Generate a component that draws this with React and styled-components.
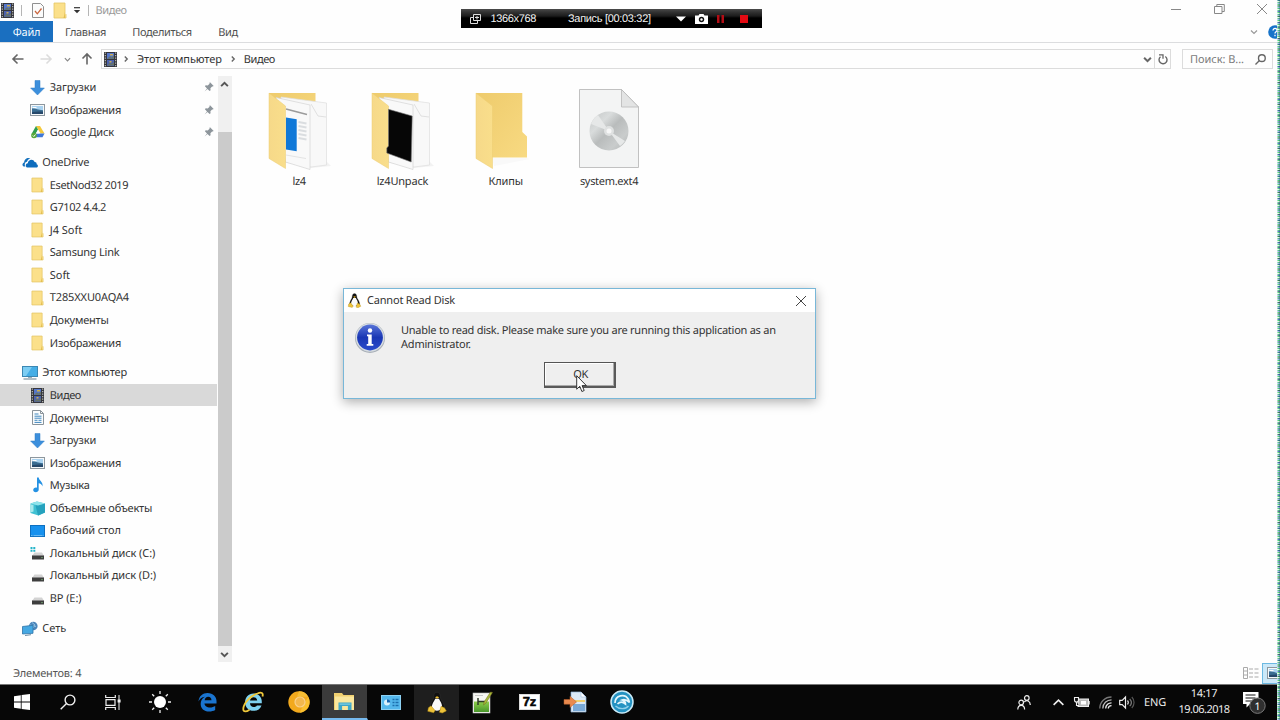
import React from "react";
import styled, { createGlobalStyle } from "styled-components";

const Global = createGlobalStyle`
  * { box-sizing: border-box; }
  html, body { margin: 0; padding: 0; overflow: hidden; }
  body {
    font-family: "Noto Sans", "Open Sans", sans-serif;
    font-size: 11px;
    color: #333;
    text-rendering: geometricPrecision;
  }
  svg { display: block; flex: none; overflow: visible; }
`;

const Screen = styled.div`
  position: relative;
  width: 1280px;
  height: 720px;
  display: flex;
  background: #fefefe;
  overflow: hidden;
`;
const Desktop = styled.div`
  flex: 1;
  min-width: 0;
  display: flex;
  flex-direction: column;
`;
const NoiseStrip = styled.div`
  width: 3px;
  height: 720px;
  background:
    linear-gradient(90deg, rgba(255, 255, 255, 0.45) 0 1px, transparent 1px 2px, rgba(20, 50, 110, 0.3) 2px),
    repeating-linear-gradient(180deg, rgba(20, 40, 160, 0.45) 0 1px, transparent 1px 5px, rgba(20, 20, 30, 0.4) 5px 6px, transparent 6px 11px),
    repeating-linear-gradient(180deg, #4fd27a 0 1px, #e0f6e0 1px 2px, #58c08f 2px 3px, #a5b8e8 3px 4px);
`;
const Text = styled.span`
  white-space: pre;
  letter-spacing: ${(p) => p.$t ?? -0.19}px;
  color: ${(p) => p.$c || "inherit"};
  font-size: 11px;
  line-height: 16px;
`;

/* ---------- explorer header ---------- */
const TitleBar = styled.div`
  height: 21px;
  display: flex;
  align-items: center;
  justify-content: space-between;
`;
const QuickAccess = styled.div`
  display: flex;
  align-items: center;
  height: 21px;
  padding-left: 1px;
`;
const Divider = styled.i`
  width: 1px;
  height: 11px;
  background: #b5b5b5;
  margin: 0 ${(p) => p.$r}px 0 ${(p) => p.$l}px;
`;
const WindowButtons = styled.div`
  display: flex;
  align-items: center;
  gap: 32.5px;
  padding: 0 10px 4px 0;
`;
const TabRow = styled.div`
  height: 22px;
  display: flex;
  justify-content: space-between;
  border-bottom: 1px solid #dcdddf;
`;
const Tabs = styled.div`
  display: flex;
`;
const Tab = styled.div`
  height: 21px;
  width: ${(p) => p.$w}px;
  padding-top: 2px;
  display: flex;
  align-items: center;
  justify-content: center;
  background: ${(p) => (p.$active ? "#1a6fc0" : "transparent")};
  color: ${(p) => (p.$active ? "#f4faff" : "#505050")};
`;
const RibbonTools = styled.div`
  display: flex;
  align-items: center;
  gap: 10px;
  width: 27px;
  overflow: hidden;
`;
const AddressRow = styled.div`
  height: 33px;
  display: flex;
  align-items: center;
  padding: 0 4px 0 12px;
`;
const Nav = styled.div`
  display: flex;
  align-items: center;
  width: 89px;
`;
const AddressBox = styled.div`
  flex: 1;
  height: 20px;
  border: 1px solid #dcdcdc;
  display: flex;
  align-items: center;
  padding-left: 2px;
`;
const Crumb = styled.div`
  display: flex;
  align-items: center;
  flex: 1;
`;
const Refresh = styled.div`
  height: 18px;
  width: 16px;
  display: flex;
  align-items: center;
  justify-content: center;
  border-left: 1px solid #dcdcdc;
`;
const SearchBox = styled.div`
  width: 91px;
  height: 20px;
  margin-left: 11px;
  border: 1px solid #dcdcdc;
  display: flex;
  align-items: center;
  justify-content: space-between;
  padding: 0 6px 0 7px;
`;

/* ---------- body ---------- */
const Body = styled.div`
  height: 587px;
  display: flex;
`;
const Tree = styled.div`
  width: 217px;
  height: 587px;
  padding-top: 0.5px;
`;
const Group = styled.div`
  margin-bottom: 7.3px;
`;
const TreeRow = styled.div`
  height: 22.57px;
  display: flex;
  align-items: center;
  padding: 0 3px 0 ${(p) => (p.$root ? 22 : 29.5)}px;
  background: ${(p) => (p.$selected ? "#d9d9d9" : "transparent")};
`;
const IconCell = styled.span`
  width: 16px;
  margin-right: 4.3px;
  display: flex;
  justify-content: center;
`;
const LabelBox = styled.div`
  display: flex;
  padding-top: ${(p) => p.$down ?? 1.5}px;
`;
const PinCell = styled.span`
  margin-left: auto;
`;
const ScrollBar = styled.div`
  width: 14px;
  height: 586px;
  margin-left: 1px;
  background: #f0f0f0;
  display: flex;
  flex-direction: column;
  justify-content: space-between;
`;
const ScrollButton = styled.div`
  height: 16px;
  padding: 1px 1px 0 0;
  display: flex;
  align-items: center;
  justify-content: center;
`;
const Thumb = styled.div`
  margin-top: 40px;
  flex: 1;
  background: #cbcbcb;
`;
const Files = styled.div`
  display: flex;
  padding: 8px 0 0 15.5px;
`;
const FileItem = styled.div`
  width: 103.3px;
  display: flex;
  flex-direction: column;
  align-items: center;
`;
const StatusBar = styled.div`
  height: 21px;
  display: flex;
  align-items: center;
  justify-content: space-between;
  padding: 0 0 0 13px;
`;
const ViewModes = styled.div`
  display: flex;
  align-items: center;
  gap: 3px;
`;
const ViewSelected = styled.div`
  width: 15px;
  height: 21px;
  border: 1px solid #6cb9e2;
  border-right: 0;
  background: #cbe8f8;
  display: flex;
  align-items: center;
  padding-left: 4px;
  overflow: hidden;
`;

/* ---------- taskbar ---------- */
const TaskBar = styled.div`
  height: 37px;
  background: #070707;
  border-top: 1px solid #777;
  display: flex;
  justify-content: space-between;
`;
const TaskApps = styled.div`
  display: flex;
`;
const TaskButton = styled.div`
  width: ${(p) => p.$w || 46.1}px;
  display: flex;
  align-items: center;
  justify-content: center;
  background: ${(p) => p.$bg || "transparent"};
  border-bottom: ${(p) => (p.$active ? "2px solid #76b9ed" : "0")};
  border-right: ${(p) => (p.$bg ? "1px solid #070707" : "0")};
`;
const Tray = styled.div`
  display: flex;
  align-items: center;
  color: #ececec;
`;
const TrayCell = styled.div`
  width: ${(p) => p.$w}px;
  display: flex;
  flex-direction: column;
  align-items: center;
  justify-content: center;
`;

/* ---------- floating windows ---------- */
const Recorder = styled.div`
  position: absolute;
  left: 461px;
  top: 9px;
  width: 301px;
  height: 19px;
  background: linear-gradient(#4a4a4a 0, #333 3px, #1c1c1c 7px, #000 9px);
  color: #f2f2f2;
  display: flex;
  align-items: center;
  padding: 1px 0 0 9px;
  font-family: "Liberation Sans", Arial, sans-serif;
`;
const Spacer = styled.i`
  width: ${(p) => p.$w}px;
`;
const Dialog = styled.div`
  position: absolute;
  left: 343px;
  top: 288px;
  width: 473px;
  height: 111px;
  border: 1px solid #78b7d8;
  background: #efefef;
  box-shadow: 0 3px 11px rgba(0, 0, 0, 0.32);
`;
const DialogTitle = styled.div`
  height: 23px;
  background: #fff;
  display: flex;
  align-items: center;
  padding: 0 9.5px 0 4px;
`;
const DialogName = styled.div`
  flex: 1;
  padding-left: 6px;
`;
const DialogContent = styled.div`
  display: flex;
  padding: 9px 0 0 10px;
  height: 50px;
`;
const Message = styled.div`
  padding: 2.5px 0 0 15px;
  display: flex;
  flex-direction: column;
  span { line-height: 14px; }
`;
const OkButton = styled.div`
  width: 72px;
  height: 26px;
  margin-left: 200px;
  padding: 1px 0 0 2px;
  border: 1px solid #555;
  border-right: 2px solid #5a5a5a;
  border-bottom: 2px solid #5a5a5a;
  box-shadow: inset -1px -1px 0 #aaa, inset 1px 1px 0 #fff;
  display: flex;
  align-items: center;
  justify-content: center;
`;
const Cursor = styled.div`
  position: absolute;
  left: 576px;
  top: 375px;
`;

/* ---------- icons ---------- */
const FolderIcon = ({ w = 13, h = 16 }) => (
  <svg width={w} height={h} viewBox="0 0 14 17">
    <path d="M1 1h11v10.5l1 1V16H1z" fill="#fbe08a" stroke="#e6c766" strokeWidth=".8" />
    <path d="M12 10v6h-1.5z" fill="#e2bd52" />
  </svg>
);
const FilmIcon = ({ w = 13, h = 15 }) => (
  <svg width={w} height={h} viewBox="0 0 13 15">
    <rect width="13" height="15" fill="#35363d" />
    <path d="M1.3 .5v14M11.7 .5v14" stroke="#c9c9bd" strokeWidth="1.1" strokeDasharray="1.3 1.2" />
    <rect x="3" y="1" width="7" height="6" fill="#5677c9" />
    <rect x="3" y="8" width="7" height="6" fill="#4c62ad" />
    <path d="M3 6.8l3-2.6 1.5 1.2L10 3.6v3.2zM3 13.6l3-3 1.6 1.5 2.4-2v3.5z" fill="#66736a" />
    <path d="M6 2h3v1.5H6zM5.5 9h2v1.4h-2z" fill="#c9ad54" />
  </svg>
);
const DownIcon = () => (
  <svg width="15" height="15" viewBox="0 0 15 15">
    <path d="M5 .5h5V8h4.4L7.5 15 .6 8H5z" fill="#3c8fdc" stroke="#2f7cc6" strokeWidth=".5" />
  </svg>
);
const PictureIcon = () => (
  <svg width="15" height="12" viewBox="0 0 15 12">
    <rect x=".5" y=".5" width="14" height="11" fill="#f5f8fa" stroke="#8d979e" />
    <rect x="2" y="2" width="11" height="8" fill="#a9d2f0" />
    <path d="M2 4.5c3-.8 5 1.5 11 1.8V10H2z" fill="#3a6d92" />
    <path d="M2 8.3c4-1 7-1 11-.6V10H2z" fill="#26486a" />
    <path d="M2.5 3h4v1.2h-4z" fill="#fff" />
  </svg>
);
const DriveIcon = () => (
  <svg width="14" height="14" viewBox="0 0 14 14">
    <path d="M5 1h4l4.5 7.5H9.6z" fill="#f5c93b" />
    <path d="M5 1l2 3.6L2.5 12.5.5 9z" fill="#2f9e4f" />
    <path d="M4.8 8.5h8.7l-2 3.8h-9z" fill="#3f78d8" />
    <circle cx="3" cy="10.5" r="2.8" fill="#58a83c" />
    <path d="M1.8 10.5l1 1 1.7-2" stroke="#fff" fill="none" />
    <path d="M6.9 5l1.9 3.5H5z" fill="#fff" />
  </svg>
);
const OneDriveIcon = () => (
  <svg width="16" height="11" viewBox="0 0 16 11">
    <path d="M2.5 9.5C0 9.5-.2 6 2.2 5.4 2 2.2 6-.2 8.4 1.7c-2 .2-3 1.5-3.4 3-2 .3-2.9 2.8-1.6 4.8z" fill="#1571bd" />
    <path d="M5.8 10.6c-2.6 0-2.8-4 0-4.3.2-3.8 5.5-4.8 6.8-1.3 2 0 2.2 1.5 2 2.2 2 .6 1.6 3.4-.4 3.4z" fill="#0d6cbd" />
  </svg>
);
const PcIcon = () => (
  <svg width="16" height="14" viewBox="0 0 16 14">
    <rect x=".5" y=".5" width="15" height="10" fill="#45aee6" stroke="#3b87b3" />
    <path d="M1 1h9L4 10H1z" fill="#7ccdf3" />
    <path d="M6 11h4v1H6z" fill="#9cb0ba" />
    <path d="M1.5 13h13" stroke="#7d939f" strokeWidth="1.2" />
  </svg>
);
const DocIcon = () => (
  <svg width="12" height="15" viewBox="0 0 12 15">
    <path d="M.5.5h8l3 3v11H.5z" fill="#fafcfd" stroke="#8a949b" />
    <path d="M2.5 4h4M2.5 6.2h7M2.5 8.2h7M2.5 10.3h3M6.5 10.3h3M2.5 12.4h7" stroke="#3f87bf" strokeWidth="1" />
    <path d="M8.5.5v3h3" fill="none" stroke="#8a949b" />
  </svg>
);
const MusicIcon = () => (
  <svg width="12" height="16" viewBox="0 0 12 16">
    <path d="M5 .5h1.7C7.2 4 11.3 4.600 10.5 9.500 10 7.500 8.500 6.500 6.700 6.300v6.500c0 3-5.200 3.300-5.500.5C1 11.300 3.200 10 5 10.700z" fill="#2491e3" />
  </svg>
);
const CubeIcon = () => (
  <svg width="16" height="15" viewBox="0 0 16 15">
    <path d="M.5 2.500L7 .5l8 2v9L8.500 14.500.5 12z" fill="#3fc0d2" />
    <path d="M5.500 4.500l9.500-2v9L8 14.500z" fill="#25a1bd" />
    <path d="M.5 2.500L7 .5l8 2-7 2z" fill="#8fe3ea" />
    <path d="M.5 3.200L3.500 4v6.500l-3 1z" fill="#a8e9ec" />
  </svg>
);
const DesktopIcon = () => (
  <svg width="15" height="12" viewBox="0 0 15 12">
    <rect x=".5" y=".5" width="14" height="11" fill="#1791ee" stroke="#0d6fc0" />
    <path d="M1 10.600h13" stroke="#8ac6f3" strokeWidth=".8" strokeDasharray="1.500 1 9 1" />
  </svg>
);
const DiskIcon = ({ win }) => (
  <svg width="14" height="13" viewBox="0 0 14 13">
    {win && <path d="M-.5 0h2v2h-2zM2.300 0h2v2h-2zM-.5 2.800h2v2h-2zM2.300 2.800h2v2h-2z" fill="#24b4c9" />}
    <path d="M3.500 5.500h7.500L13 9H1z" fill="#d3d3d3" />
    <rect x="1" y="8.500" width="12" height="4" fill="#3e3e3e" />
    <path d="M1 8.500h12" stroke="#888" strokeWidth=".8" />
    <circle cx="11" cy="10.600" r=".6" fill="#8fdc8c" />
  </svg>
);
const NetIcon = () => (
  <svg width="16" height="15" viewBox="0 0 16 15">
    <circle cx="11.300" cy="5" r="4.300" fill="#4d86ba" />
    <path d="M10 1.500l3 2.500-2 3M8 4l6 1.500" stroke="#8fc0e2" fill="none" />
    <path d="M.5 5.500l10.500-1.200v8L.5 13z" fill="#45a8e2" stroke="#2f74a8" strokeWidth=".8" />
    <path d="M3 14.500l6-.8" stroke="#6b8ca4" />
  </svg>
);
const PinIcon = () => (
  <svg width="10" height="10" viewBox="0 0 10 10">
    <path d="M6 .3l3.700 3.700-1 .6-.6-.1-1.700 1.800.2 2-1 .8L3.500 7 .6 9.500 3 6.400.9 4.300l.8-1 2 .2 1.900-1.700-.2-.8z" fill="#8d959b" />
  </svg>
);
const Chevron = ({ dir = "down", size = 8, color = "#666", sw = 1.4 }) => {
  const paths = { down: "M1 2.500L4 5.500 7 2.500", up: "M1 5.500L4 2.500 7 5.500", right: "M2.800 1.600L5.200 4 2.800 6.400" };
  return (
    <svg width={size} height={size} viewBox="0 0 8 8">
      <path d={paths[dir]} fill="none" stroke={color} strokeWidth={sw} />
    </svg>
  );
};
const Arrow = ({ dir, color }) => {
  const rot = { left: 0, right: 180, up: 90 }[dir];
  return (
    <svg width="12" height="12" viewBox="0 0 12 12">
      <path transform={`rotate(${rot} 6 6)`} d="M11.500 6H1M5.500 1.500L1 6l4.500 4.500" fill="none" stroke={color} strokeWidth="1.600" />
    </svg>
  );
};
const Tux = ({ w, h }) => (
  <svg width={w} height={h} viewBox="0 0 20 22">
    <path d="M6.500 5c0-6.300 7-6.300 7 0 0 4 5.500 7 4.500 14H2.500C1.500 12 6.500 9 6.500 5z" fill="#111" stroke="#3a3a3a" strokeWidth=".4" />
    <path d="M8 7h4.200c.6 2.500 3.800 5 3 9.500-2 4-8 4.500-10.500 0C4.300 12 7.500 9.500 8 7z" fill="#fafafa" />
    <path d="M8 5.400l2-1 2.300 1L10 7.200z" fill="#e9b92e" />
    <path d="M.3 20.200l.7-3.700 2.800-2 4.200 5-1.500 2.200zM19.800 19.800l-2-3.300-3.500-1.500-1.800 6.200 3 .8z" fill="#eec33a" stroke="#a88413" strokeWidth=".5" />
  </svg>
);

/* Large thumbnails */
const Flap = () => <path d="M10 9l16.500 13v62.500L10 74.500z" fill="url(#flap)" stroke="#edcc70" strokeWidth=".5" />;
const Sheets = () => (
  <g>
    <path d="M24 74h40l8 8-20 2z" fill="#f2f2f2" />
    <path d="M22 13l45.500 6v62L52 83 26 78z" fill="#f8f8f8" stroke="#dedede" strokeWidth=".7" />
    <path d="M52 20l7 12 8 1" fill="none" stroke="#d5d5d5" strokeWidth=".7" />
    <path d="M17 13.500L51 21v64.500L26.500 78z" fill="#f9f9f9" stroke="#d4d4d4" strokeWidth=".7" />
  </g>
);
const HiddenDefs = styled.svg`
  position: absolute;
`;
const Defs = () => (
  <HiddenDefs width="0" height="0">
    <defs>
      <linearGradient id="flap" x1="0" x2="1"><stop stopColor="#f6d989" /><stop offset="1" stopColor="#f9de8b" /></linearGradient>
      <linearGradient id="back" x1="0" x2="1" y1="0" y2="1"><stop stopColor="#eecb6c" /><stop offset="1" stopColor="#f8da82" /></linearGradient>
      <linearGradient id="disc" x1="0" x2="1" y1="0" y2="1">
        <stop stopColor="#c2c5c5" /><stop offset=".3" stopColor="#d9dcdc" /><stop offset=".5" stopColor="#b9bcbc" /><stop offset=".75" stopColor="#c9cccc" /><stop offset="1" stopColor="#b0b3b3" />
      </linearGradient>
      <linearGradient id="info" x1="0" x2="0" y1="0" y2="1"><stop stopColor="#5773d8" /><stop offset=".5" stopColor="#1a37b4" /><stop offset="1" stopColor="#2a4bcb" /></linearGradient>
      <linearGradient id="grn" x1="0" x2="0" y1="0" y2="1"><stop stopColor="#8fce4a" /><stop offset="1" stopColor="#48962a" /></linearGradient>
    </defs>
  </HiddenDefs>
);
const Lz4Thumb = () => (
  <svg width="80" height="90" viewBox="0 0 80 90">
    <path d="M10 9h46.500v60H10z" fill="url(#back)" />
    <Sheets />
    <path d="M27 25l21 5.500" stroke="#9b9b9b" strokeWidth="1.500" />
    <path d="M27 33.500l10.700 1.700v32L27 65.500z" fill="#0f78d8" />
    <path d="M39.500 38l8 1.500M39.500 42l8 1.500M39.500 46l8 1.500M39.500 50l8 1.500M39.500 54l8 1.500" stroke="#dadde0" strokeWidth="2" />
    <path d="M27 71l20 3.500" stroke="#e4e4e4" />
    <Flap />
  </svg>
);
const UnpackThumb = () => (
  <svg width="80" height="90" viewBox="0 0 80 90">
    <path d="M10 9h46.500v60H10z" fill="url(#back)" />
    <Sheets />
    <Flap />
    <path d="M26.500 25.300L50.200 32l-1 46-24.400-9v-5l1.700-2z" fill="#060606" stroke="#777" strokeWidth=".6" />
  </svg>
);
const ClipsThumb = () => (
  <svg width="80" height="90" viewBox="0 0 80 90">
    <path d="M26 74h34l4 1-36 7z" fill="#f9f9f9" />
    <path d="M10 9h46.300v39l4.700 4.500v21H15z" fill="url(#back)" />
    <Flap />
  </svg>
);
const ImageThumb = () => (
  <svg width="80" height="90" viewBox="0 0 80 90">
    <path d="M10.500 5.500h42L69.500 23v60.500h-59z" fill="#f3f4f4" stroke="#b2b2b2" strokeWidth=".8" />
    <path d="M52.500 5.500V23h17z" fill="#e3e4e4" stroke="#b8b8b8" strokeWidth=".8" />
    <circle cx="40" cy="47" r="19.500" fill="url(#disc)" />
    <path d="M40 47L22 40a19.500 19.500 0 0 1 7-9zM40 47l16 10a19.500 19.500 0 0 1-5 5z" fill="#e6e8e8" />
    <circle cx="40" cy="47" r="5" fill="#dfe1e1" />
    <circle cx="40" cy="47" r="2.500" fill="#f7f7f7" />
  </svg>
);

/* Taskbar drawings */
const WinLogo = () => (
  <svg width="16" height="16" viewBox="0 0 16 16">
    <path d="M0 2.200l6.800-1v6.400H0zM7.600 1.100L16 0v7.600H7.600zM0 8.400h6.800v6.400l-6.800-1zM7.600 8.400H16V16l-8.400-1.100z" fill="#fff" />
  </svg>
);
const SearchGlyph = ({ size = 16, color = "#f0f0f0", sw = 1.400 }) => (
  <svg width={size} height={size} viewBox="0 0 16 16">
    <circle cx="10" cy="6" r="4.900" fill="none" stroke={color} strokeWidth={sw} />
    <path d="M6.500 9.500L.7 15.300" stroke={color} strokeWidth={sw} />
  </svg>
);
const TaskView = () => (
  <svg width="16" height="15" viewBox="0 0 16 15">
    <path d="M.7 0v2.500h9.600V0M.7 15v-2.500h9.600V15M1 4.600h9v5.800H1z" fill="none" stroke="#eee" strokeWidth="1.200" />
    <path d="M14 0v15" stroke="#ddd" strokeWidth="1.100" />
    <rect x="12.600" y="4.500" width="3" height="3" fill="#eee" />
  </svg>
);
const Sun = () => (
  <svg width="22" height="22" viewBox="0 0 22 22">
    <circle cx="11" cy="11" r="6" fill="#fff" />
    <path d="M11 0v3M11 19v3M0 11h3M19 11h3M3.200 3.200l2 2M16.800 16.800l2 2M18.800 3.200l-2 2M5.200 16.800l-2 2" stroke="#eee" strokeWidth="1.300" />
  </svg>
);
const EdgePath = "M.5 9.500C1.200 3.500 5 .5 10 .5c6 0 9.500 4 9.500 8.500v2.500H6.800c.3 3 3 4.300 5.700 4.300 2.300 0 4.200-.7 5.600-1.600v4.200c-1.600 1-4 1.600-6.300 1.600-5.600 0-9-3.300-9-8 0-3.300 1.500-6 4.500-7.500C4 5 1.700 6.800.5 9.500zM7 8.200h7.200c0-2.300-1.400-3.600-3.400-3.600-2.100 0-3.500 1.400-3.800 3.600z";
const Edge = () => (
  <svg width="19" height="20" viewBox="0 0 20 20"><path fillRule="evenodd" d={EdgePath} fill="#1a74cf" /></svg>
);
const IE = () => (
  <svg width="22" height="22" viewBox="0 0 22 22">
    <path fillRule="evenodd" d="M11.500 2.500c5 0 8.300 3.600 8.300 8.200v1.600H8c.2 2.500 1.600 3.700 3.700 3.700 1.600 0 2.600-.6 3.200-1.600h4.600c-1.200 3.400-4 5.400-7.900 5.400-5 0-8.500-3.500-8.500-8.600s3.500-8.700 8.400-8.700zM8 9.600h7.200c-.2-2-1.600-3.300-3.600-3.300S8.300 7.600 8 9.600z" fill="#7fd3f2" />
    <path d="M20.500 5.500c1-3.500-1-5-5-3C8.500 4.500 1 13 1.300 18.500c.2 2.700 3 2.400 6.200.2" fill="none" stroke="#efc83b" strokeWidth="1.800" />
  </svg>
);
const Canary = () => (
  <svg width="22" height="22" viewBox="0 0 22 22">
    <circle cx="11" cy="11" r="10.700" fill="#f2a91d" />
    <path d="M11 .3a10.700 10.700 0 0 1 9.300 5.400H9z" fill="#f7bd33" />
    <path d="M20.300 6a10.700 10.700 0 0 1-8.500 15.700l4-9z" fill="#fbc02f" />
    <circle cx="12" cy="11" r="5" fill="#f3b84e" stroke="#f9d08a" strokeWidth="1.200" />
  </svg>
);
const ExplorerIcon = () => (
  <svg width="21" height="19" viewBox="0 0 21 19">
    <path d="M0 1h8l1.500 2H20v15H0z" fill="#f0d070" />
    <path d="M1 4.500h19V18H1z" fill="#fae79d" />
    <path d="M4.500 18v-7.500h13V18h-3.600v-4h-5.800v4z" fill="#3fa6c8" />
    <path d="M5.500 11.500h11v1.200h-11z" fill="#7fd0e4" />
  </svg>
);
const PanelIcon = () => (
  <svg width="20" height="15" viewBox="0 0 20 15">
    <rect x=".5" y=".5" width="19" height="14" fill="#54b7ec" stroke="#8dd1f3" />
    <circle cx="6" cy="7.500" r="3" fill="#d9f0fc" />
    <path d="M6 7.500V4.300A3.200 3.200 0 0 1 9.200 7.500z" fill="#1565b0" />
    <path d="M11.500 4.500h6M11.500 7.500h6M11.500 10.500h6" stroke="#1c6fae" strokeWidth="1.300" strokeDasharray="2 1 3" />
  </svg>
);
const NotesIcon = () => (
  <svg width="22" height="23" viewBox="0 0 22 23">
    <rect x="1" y="2" width="17" height="20" fill="#f7f7f2" stroke="#bbb" strokeWidth=".6" />
    <rect x="2" y="10.500" width="15" height="10.500" fill="url(#grn)" />
    <path d="M3 4.500h8" stroke="#bbb" strokeWidth=".8" />
    <path d="M6 7v7M6 10.500h7" stroke="#2f3b28" strokeWidth="1.500" />
    <path d="M20.500 1.500L14 12l-2.500 2 .7-3.200L18.500 1z" fill="#a7bd3a" stroke="#75631e" strokeWidth=".5" />
  </svg>
);
const SevenBox = styled.div`
  width: 21px;
  height: 16px;
  background: #fff;
  border: 1px solid #ddd;
  color: #050505;
  display: flex;
  align-items: center;
  justify-content: center;
  font: bold 13px/14px "Liberation Sans", sans-serif;
  -webkit-text-stroke: 0.5px #050505;
`;
const ConvertIcon = () => (
  <svg width="23" height="22" viewBox="0 0 23 22">
    <path d="M7 1h10l5 5v15H7z" fill="#dce9f5" stroke="#8eb3d5" strokeWidth=".7" />
    <path d="M17 1v5h5z" fill="#fff" stroke="#8eb3d5" strokeWidth=".5" />
    <path d="M8 9h13v2H8z" fill="#f2cf6d" />
    <path d="M9 13h12v7H9z" fill="#79a9d7" />
    <path d="M0 8.500h6V5.300l6.500 5.700L6 16.500v-3.300H0z" fill="#e98a4e" stroke="#b65d28" strokeWidth=".5" />
  </svg>
);
const SwirlIcon = () => (
  <svg width="24" height="24" viewBox="0 0 24 24">
    <circle cx="12" cy="12" r="11" fill="#2492c2" stroke="#c9eaf7" strokeWidth="1.500" />
    <path d="M5 13c0-8 10-10 13.500-3.500l1 3c-3-3-5-3.500-7.500-2.500 2 .5 3.500 2 3.500 4-3-2.500-6-2-8 0" fill="none" stroke="#e4f6fc" strokeWidth="1.700" />
    <path d="M5.500 16c3.500 3.500 10 3.500 13 0" fill="none" stroke="#8fd0ea" strokeWidth="1.300" />
  </svg>
);
const PeopleIcon = () => (
  <svg width="14" height="15" viewBox="0 0 14 15" fill="none" stroke="#eee" strokeWidth="1.200">
    <circle cx="4.200" cy="7.500" r="2.300" /><path d="M.8 14.500c0-5.500 6.800-5.500 6.800 0" />
    <circle cx="9.800" cy="3" r="2.300" /><path d="M7.300 7c2.500-2.500 5.900-1 6 3" />
  </svg>
);
const BatteryIcon = () => (
  <svg width="16" height="12" viewBox="0 0 16 12">
    <rect x="4" y="3" width="10.500" height="7.500" fill="#bbb" stroke="#eee" />
    <path d="M15.300 5v3.500" stroke="#ddd" />
    <path d="M.5 1.500h4v2.500a2 2 0 0 1-4 0zM2.500 6v3.500H5" fill="#111" stroke="#eee" strokeWidth="1.100" />
    <path d="M7 5h5v3.500H7z" fill="#fff" />
  </svg>
);
const WifiIcon = () => (
  <svg width="13" height="13" viewBox="0 0 13 13" fill="none" strokeWidth="1.300">
    <path d="M.8 12.500C.8 6 6 1 12.500 1" stroke="#777" /><path d="M3.800 12.500c0-5 4-8.600 8.700-8.600" stroke="#bbb" />
    <path d="M6.700 12.500c0-3.500 3-5.700 5.800-5.700M9.300 12.500c0-1.700 1.400-2.900 3.200-2.900" stroke="#eee" />
  </svg>
);
const VolumeIcon = () => (
  <svg width="16" height="13" viewBox="0 0 16 13" fill="none" strokeWidth="1.200">
    <path d="M.7 4.300h2.500L6.500 1v11L3.200 8.700H.7z" stroke="#eee" /><path d="M8.500 4.500c1 1.200 1 2.800 0 4" stroke="#ddd" />
    <path d="M10.700 2.800c2 2.200 2 5.200 0 7.400" stroke="#777" /><path d="M12.800 1c3 3.200 3 7.800 0 11" stroke="#555" />
  </svg>
);
const ActionIcon = () => (
  <svg width="24" height="24" viewBox="0 0 24 24">
    <path d="M0 2h15.500v12H7l-3.500 3.500V14H0z" fill="#fff" />
    <path d="M2.500 5h10M2.500 8h10M2.500 11h6" stroke="#111" strokeWidth="1.100" />
    <circle cx="14.500" cy="15.700" r="7.700" fill="#2f2f2f" stroke="#777" />
    <text x="14.500" y="19.500" fontSize="10.500" fill="#fff" textAnchor="middle">1</text>
  </svg>
);

/* ---------- data ---------- */
const tracking = {
  "Загрузки": -0.1, "EsetNod32 2019": -0.4, "G7102 4.4.2": -0.42, "J4 Soft": -0.05, "Soft": -0.05, "Видео": -0.42,
  "Рабочий стол": -0.07, "Локальный диск (C:)": -0.1, "Локальный диск (D:)": -0.12, "Этот компьютер": -0.1,
  "Сеть": -0.05, "Изображения": -0.2, "OneDrive": -0.24, "Документы": -0.22, "Samsung Link": -0.22,
  "lz4Unpack": -0.2, "system.ext4": -0.3, "lz4": -0.3, "BP (E:)": -0.1, "T285XXU0AQA4": -0.13, "Клипы": -0.1,
};
const tree = [
  { items: [["Загрузки", DownIcon, 1], ["Изображения", PictureIcon, 1], ["Google Диск", DriveIcon, 1]] },
  {
    root: ["OneDrive", OneDriveIcon],
    items: ["EsetNod32 2019", "G7102 4.4.2", "J4 Soft", "Samsung Link", "Soft", "T285XXU0AQA4", "Документы", "Изображения"].map((n) => [n, FolderIcon]),
  },
  {
    root: ["Этот компьютер", PcIcon],
    items: [
      ["Видео", FilmIcon, 0, 1], ["Документы", DocIcon], ["Загрузки", DownIcon], ["Изображения", PictureIcon], ["Музыка", MusicIcon],
      ["Объемные объекты", CubeIcon], ["Рабочий стол", DesktopIcon], ["Локальный диск (C:)", () => <DiskIcon win />],
      ["Локальный диск (D:)", DiskIcon], ["BP (E:)", DiskIcon],
    ],
  },
  { root: ["Сеть", NetIcon], items: [] },
];
const files = [["lz4", Lz4Thumb], ["lz4Unpack", UnpackThumb], ["Клипы", ClipsThumb], ["system.ext4", ImageThumb]];
const apps = [
  [WinLogo, 44], [SearchGlyph, 47], [TaskView, 44], [Sun, 49], [Edge], [IE], [Canary],
  [ExplorerIcon, 46, "#3b3b3b", 1], [PanelIcon], [() => <Tux w={20} h={21} />, 46, "#1e1e1e"], [NotesIcon],
  [() => <SevenBox>7z</SevenBox>], [ConvertIcon], [SwirlIcon],
];

const Label = ({ children, ...rest }) => <Text $t={tracking[children]} {...rest}>{children}</Text>;

const Row = ({ data, root }) => {
  const [name, Icon, pinned, selected] = data;
  return (
    <TreeRow $root={root} $selected={selected}>
      <IconCell><Icon /></IconCell>
      <LabelBox><Label>{name}</Label></LabelBox>
      {pinned ? <PinCell><PinIcon /></PinCell> : null}
    </TreeRow>
  );
};

export default function App() {
  return (
    <Screen>
      <Global />
      <Defs />
      <Desktop>
        <TitleBar>
          <QuickAccess>
            <FilmIcon />
            <Divider $l={7} $r={10} />
            <svg width="12" height="15" viewBox="0 0 12 15">
              <path d="M.5.5h8l3 3v11H.5z" fill="#fbfbfb" stroke="#8f8f8f" />
              <path d="M3 8l2.300 2.800L9.500 5.500" fill="none" stroke="#c9643c" strokeWidth="1.300" />
            </svg>
            <Spacer $w={9} />
            <FolderIcon w={14} h={17} />
            <Spacer $w={6} />
            <svg width="8" height="7" viewBox="0 0 8 7"><path d="M1 .7h6" stroke="#333" strokeWidth="1.200" /><path d="M.8 3h6.400L4 6.300z" fill="#333" /></svg>
            <Divider $l={7} $r={6.5} />
            <Label $c="#999">Видео</Label>
          </QuickAccess>
          <WindowButtons>
            <svg width="10" height="10" viewBox="0 0 10 10"><path d="M0 5.500h10" stroke="#888" /></svg>
            <svg width="11" height="10" viewBox="0 0 11 10"><path d="M.5 2.500h7.500v7H.5zM2.800 2.500V.5h7.500v7H8" fill="none" stroke="#888" /></svg>
            <svg width="10" height="10" viewBox="0 0 10 10"><path d="M0 0l10 10M10 0L0 10" stroke="#888" /></svg>
          </WindowButtons>
        </TitleBar>
        <TabRow>
          <Tabs>
            <Tab $active $w={53}><Text>Файл</Text></Tab>
            <Tab $w={65}><Text $t={-0.35}>Главная</Text></Tab>
            <Tab $w={88}><Text $t={-0.4}>Поделиться</Text></Tab>
            <Tab $w={44}><Text $t={-0.4}>Вид</Text></Tab>
          </Tabs>
          <RibbonTools>
            <Chevron color="#999" sw={1.200} />
            <svg width="14" height="14" viewBox="0 0 14 14">
              <circle cx="7" cy="7" r="6.800" fill="#1673c9" />
              <path d="M5 5.500c0-3 4.300-2.500 4 0-.2 1.300-2 1.500-2 3M7 9.800v1.400" fill="none" stroke="#fff" strokeWidth="1.300" />
            </svg>
          </RibbonTools>
        </TabRow>
        <AddressRow>
          <Nav>
            <Arrow dir="left" color="#666" />
            <Spacer $w={16} />
            <Arrow dir="right" color="#dcdcdc" />
            <Spacer $w={12} />
            <Chevron color="#888" size={7} />
            <Spacer $w={10} />
            <Arrow dir="up" color="#666" />
          </Nav>
          <AddressBox>
            <FilmIcon />
            <Spacer $w={5} />
            <Chevron dir="right" />
            <Spacer $w={7} />
            <Crumb>
              <LabelBox $down={1}><Label>Этот компьютер</Label></LabelBox>
              <Spacer $w={7} />
              <Chevron dir="right" />
              <Spacer $w={7} />
              <LabelBox $down={1}><Label>Видео</Label></LabelBox>
            </Crumb>
            <Chevron size={9} sw={1.800} />
            <Spacer $w={2} />
            <Refresh>
              <svg width="10" height="11" viewBox="0 0 10 11">
                <path d="M7.300 2.500A4 4 0 1 1 2.500 2.700" fill="none" stroke="#666" strokeWidth="1.400" />
                <path d="M1 .8h4v4" fill="none" stroke="#666" strokeWidth="1.300" />
              </svg>
            </Refresh>
          </AddressBox>
          <SearchBox>
            <LabelBox $down={1}><Text $t={-0.05} $c="#7a7a7a">Поиск: В...</Text></LabelBox>
            <SearchGlyph size={11} color="#666" sw={2} />
          </SearchBox>
        </AddressRow>
        <Body>
          <Tree>
            {tree.map((g, i) => (
              <Group key={i}>
                {g.root && <Row data={g.root} root />}
                {g.items.map((it) => <Row key={it[0]} data={it} />)}
              </Group>
            ))}
          </Tree>
          <ScrollBar>
            <ScrollButton><Chevron dir="up" size={9} color="#555" sw={1.700} /></ScrollButton>
            <Thumb />
            <ScrollButton><Chevron size={9} color="#555" sw={1.700} /></ScrollButton>
          </ScrollBar>
          <Files>
            {files.map(([n, Pic]) => (
              <FileItem key={n}>
                <Pic />
                <Label>{n}</Label>
              </FileItem>
            ))}
          </Files>
        </Body>
        <StatusBar>
          <LabelBox $down={1}><Text $c="#555">Элементов: 4</Text></LabelBox>
          <ViewModes>
            <svg width="16" height="12" viewBox="0 0 16 12">
              <path d="M.5.5h4v11h-4zM.5 4h4M.5 8h4" fill="none" stroke="#aaa" />
              <path d="M6 2h10M6 6h10M6 10h10" stroke="#aaa" strokeDasharray="4 1.500" />
            </svg>
            <ViewSelected><PictureIcon /></ViewSelected>
          </ViewModes>
        </StatusBar>
        <TaskBar>
          <TaskApps>
            {apps.map(([Icon, w, bg, active], i) => (
              <TaskButton key={i} $w={w} $bg={bg} $active={active}><Icon /></TaskButton>
            ))}
          </TaskApps>
          <Tray>
            <TrayCell $w={40}><PeopleIcon /></TrayCell>
            <TrayCell $w={28}><Chevron dir="up" size={13} color="#eee" sw={1} /></TrayCell>
            <TrayCell $w={19}><BatteryIcon /></TrayCell>
            <TrayCell $w={28}><WifiIcon /></TrayCell>
            <TrayCell $w={15}><VolumeIcon /></TrayCell>
            <TrayCell $w={42}><LabelBox $down={1}><Text $t={-0.15}>ENG</Text></LabelBox></TrayCell>
            <TrayCell $w={56}><Text $t={-0.3}>14:17</Text><Text $t={-0.5}>19.06.2018</Text></TrayCell>
            <TrayCell $w={45}><ActionIcon /></TrayCell>
          </Tray>
        </TaskBar>
      </Desktop>
      <NoiseStrip />
      <Recorder>
        <svg width="11" height="10" viewBox="0 0 11 10">
          <path d="M3.500.5h7v6h-7zM3.500 3.500h-3v6h7v-3" fill="none" stroke="#ddd" />
          <path d="M5 3.500h4M7 2v3.500" stroke="#ddd" />
        </svg>
        <Spacer $w={9.5} />
        <Text $t={-0.35}>1366x768</Text>
        <Spacer $w={32} />
        <Text $t={-0.32}>Запись [00:03:32]</Text>
        <Spacer $w={25} />
        <svg width="10" height="6" viewBox="0 0 10 6"><path d="M0 .5h10L5 5.500z" fill="#fff" /></svg>
        <Spacer $w={9} />
        <svg width="13" height="10" viewBox="0 0 13 10">
          <path d="M0 1.500h3.500L4.500 0h4l1 1.500H13V10H0z" fill="#fff" /><circle cx="6.500" cy="5.500" r="2.700" fill="#111" /><circle cx="6.500" cy="5.500" r="1.200" fill="#fff" />
        </svg>
        <Spacer $w={9} />
        <svg width="7" height="8" viewBox="0 0 7 8"><path d="M0 0h2.500v8H0zM4.500 0H7v8H4.500z" fill="#b30c14" /></svg>
        <Spacer $w={16} />
        <svg width="8" height="8" viewBox="0 0 8 8"><rect width="8" height="8" fill="#e40a12" /></svg>
      </Recorder>
      <Dialog>
        <DialogTitle>
          <Tux w={13} h={15} />
          <DialogName><Text>Cannot Read Disk</Text></DialogName>
          <svg width="10" height="10" viewBox="0 0 10 10"><path d="M0 0l10 10M10 0L0 10" stroke="#444" /></svg>
        </DialogTitle>
        <DialogContent>
          <svg width="32" height="32" viewBox="0 0 32 32">
            <circle cx="16" cy="17" r="15" fill="#a9b0b8" />
            <circle cx="16" cy="16.500" r="14.300" fill="#d7dde2" />
            <circle cx="16" cy="16.500" r="12.900" fill="url(#info)" />
            <circle cx="16" cy="9.500" r="2.200" fill="#fff" />
            <path d="M13 13.500h4.700v9.500h1.600v1.800h-6.600V23h1.500v-7.700H13z" fill="#fff" />
          </svg>
          <Message>
            <Text $t={-0.25}>Unable to read disk. Please make sure you are running this application as an</Text>
            <Text $t={-0.2}>Administrator.</Text>
          </Message>
        </DialogContent>
        <OkButton><Text $t={-0.4}>OK</Text></OkButton>
      </Dialog>
      <Cursor>
        <svg width="12" height="18" viewBox="0 0 12 18">
          <path d="M.7.700v13.500l3.100-2.900 2.100 5.200 2.300-1-2.100-4.900h4.300z" fill="#fff" stroke="#222" strokeWidth=".9" />
        </svg>
      </Cursor>
    </Screen>
  );
}
